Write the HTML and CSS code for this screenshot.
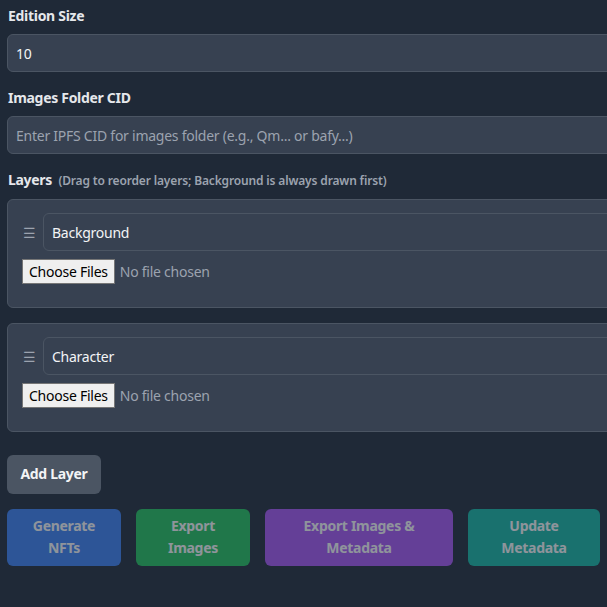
FILE: index.html
```html
<!DOCTYPE html>
<html lang="en">
<head>
<meta charset="utf-8">
<title>NFT Generator</title>
<link rel="stylesheet" href="styles.css">
</head>
<body>
<div class="viewport">
<div class="form">
  <div class="field">
    <label class="label" for="edition">Edition Size</label>
    <input class="input" id="edition" type="number" value="10">
  </div>
  <div class="field">
    <label class="label" for="cid">Images Folder CID</label>
    <input class="input" id="cid" type="text" placeholder="Enter IPFS CID for images folder (e.g., Qm... or bafy...)">
  </div>
  <div class="field">
    <div class="label">Layers <span class="hint">(Drag to reorder layers; Background is always drawn first)</span></div>
    <div class="layers">
      <div class="layer">
        <div class="layer-head">
          <span class="handle">☰</span>
          <input class="input" type="text" value="Background">
        </div>
        <input class="file" type="file" multiple>
      </div>
      <div class="layer">
        <div class="layer-head">
          <span class="handle">☰</span>
          <input class="input" type="text" value="Character">
        </div>
        <input class="file" type="file" multiple>
      </div>
    </div>
  </div>
  <button class="btn btn-gray" type="button">Add Layer</button>
  <div class="actions">
    <button class="btn action blue w1" type="button" disabled>Generate NFTs</button>
    <button class="btn action green w1" type="button" disabled>Export Images</button>
    <button class="btn action purple w3" type="button" disabled>Export Images &amp; Metadata</button>
    <button class="btn action teal w4" type="button" disabled>Update Metadata</button>
  </div>
</div>
</div>
</body>
</html>
```
FILE: styles.css
```css
html, body {
  margin: 0;
  padding: 0;
  overflow: hidden;
  background: #1f2937;
}
body {
  font-family: "Noto Sans", "Open Sans", sans-serif;
  color: #e5e7eb;
  font-size: 14px;
  letter-spacing: -0.25px;
}
.viewport {
  width: 100vw;
  overflow: hidden;
}
.form {
  width: 760px;
  padding: 6px 0 0 7px;
  display: flex;
  flex-direction: column;
  align-items: flex-start;
}
.field {
  width: 100%;
  margin-bottom: 16px;
}
.label {
  display: block;
  font-weight: 700;
  font-size: 14px;
  line-height: 20px;
  margin: 0 0 8px 1px;
  color: #e5e7eb;
  letter-spacing: -0.3px;
}
.hint {
  font-size: 12px;
  font-weight: 600;
  color: #9ca3af;
  margin-left: 3px;
  letter-spacing: -0.15px;
}
.input {
  box-sizing: border-box;
  display: block;
  width: 100%;
  height: 38px;
  padding: 0 8px;
  background: #374151;
  border: 1px solid #4b5563;
  border-radius: 6px;
  color: #f3f4f6;
  font-family: inherit;
  font-size: 14px;
  letter-spacing: -0.25px;
  outline: none;
}
.input::placeholder {
  color: #9ca3af;
}
.input::-webkit-inner-spin-button,
.input::-webkit-outer-spin-button {
  -webkit-appearance: none;
  margin: 0;
}
.layers {
  display: flex;
  flex-direction: column;
  gap: 15px;
}
.layer {
  background: #374151;
  border: 1px solid #4b5563;
  border-radius: 6px;
  padding: 13px 14px 23px;
  display: flex;
  flex-direction: column;
  gap: 8px;
}
.layer-head {
  display: flex;
  align-items: center;
  gap: 8px;
}
.handle {
  color: #9ca3af;
  font-size: 14px;
  padding-left: 1px;
  width: 12px;
}
.file {
  color: #9ca3af;
  font-family: inherit;
  font-size: 14px;
  letter-spacing: -0.25px;
  height: 25px;
}
.file::file-selector-button {
  font-family: inherit;
  font-size: 14px;
  letter-spacing: -0.25px;
  background: #efefef;
  color: #000;
  border: 1px solid #767676;
  border-radius: 0;
  padding: 1px 6px;
  height: 25px;
  margin-right: 5px;
}
.btn {
  font-family: inherit;
  font-weight: 700;
  font-size: 14px;
  line-height: 22px;
  letter-spacing: -0.3px;
  border: none;
  border-radius: 6px;
  color: #f3f4f6;
}
.btn-gray {
  margin-top: 7px;
  background: #4b5563;
  padding: 8px 12px 9px;
  width: 94px;
}
.actions {
  display: flex;
  gap: 15px;
  margin-top: 15px;
}
.action {
  padding: 6px 14px 7px;
  opacity: 0.5;
  color: #ffffff;
}
.blue { background: #3b82f6; }
.green { background: #22c55e; }
.purple { background: #a855f7; }
.teal { background: #14b8a6; }
.w1 { width: 114px; }
.w3 { width: 188px; }
.w4 { width: 132px; }
```
